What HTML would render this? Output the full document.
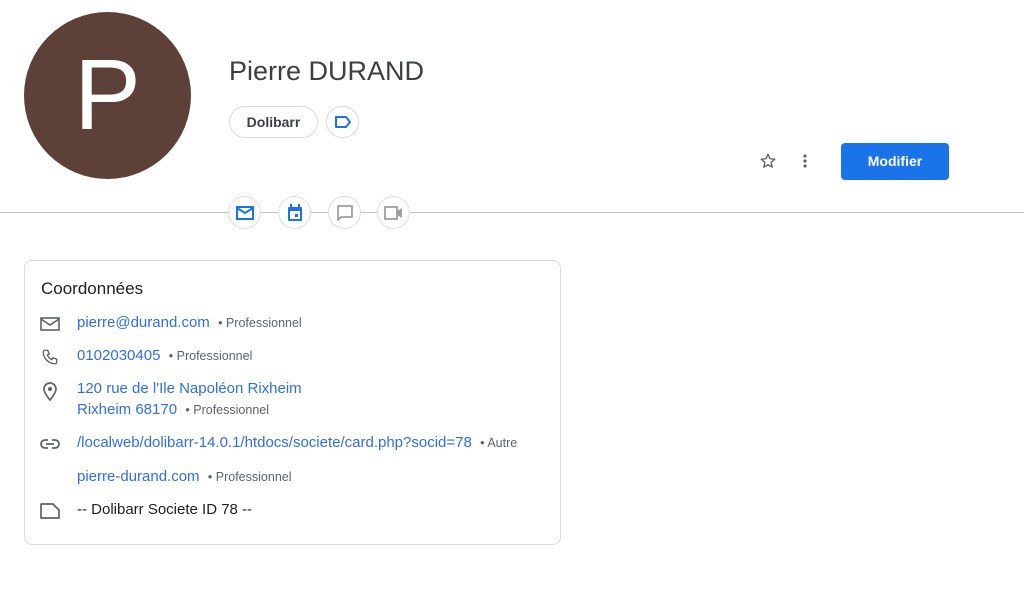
<!DOCTYPE html>
<html><head><meta charset="utf-8"><style>
*{margin:0;padding:0;box-sizing:border-box}
body{width:1024px;height:605px;background:#fff;font-family:"Liberation Sans",sans-serif;position:relative;overflow:hidden;color:#202124}
.abs{position:absolute}
.avatar{left:24px;top:12px;width:167px;height:167px;border-radius:50%;background:#5d4037;color:#fff;font-size:100px;text-align:center;line-height:167px}
.name{left:229px;top:56px;font-size:27px;color:#3c4043}
.chip{top:106px;height:32px;border:1px solid #dadce0;border-radius:16px;font-size:14px;font-weight:bold;color:#3c4043;line-height:30px;text-align:center}
.line{left:0;top:212px;width:1024px;height:1px;background:#c4c4c4}
.circ{top:196px;width:33px;height:33px;border:1px solid #e0e0e0;border-radius:50%;background:#fff;display:flex;align-items:center;justify-content:center}
.btn{left:841px;top:143px;width:108px;height:37px;background:#1a73e8;border-radius:4px;color:#fff;font-weight:bold;font-size:14px;text-align:center;line-height:37px}
.card{left:24px;top:260px;width:537px;height:285px;border:1px solid #dadce0;border-radius:8px}
.title{left:41px;top:279px;font-size:17px;color:#202124}
.row{left:77px;font-size:15px;color:#2f6fe4;white-space:nowrap}
.row small{font-size:12.5px;color:#5f6368}
.ic{left:40px}
</style></head><body>
<div class="abs avatar">P</div>
<div class="abs name">Pierre DURAND</div>
<div class="abs chip" style="left:229px;width:89px">Dolibarr</div>
<div class="abs chip" style="left:326px;width:33px;display:flex;align-items:center;justify-content:center"><svg width="18" height="14" viewBox="0 0 18 14"><path d="M2 2h10l4 5-4 5H2z" fill="none" stroke="#1a73e8" stroke-width="2" stroke-linejoin="round"/></svg></div>
<svg class="abs" style="left:759px;top:152px" width="18" height="18" viewBox="0 0 24 24"><path d="M12 3l2.7 6 6.3.6-4.8 4.3 1.4 6.3L12 17l-5.6 3.2 1.4-6.3L3 9.6 9.3 9z" fill="none" stroke="#5f6368" stroke-width="1.8" stroke-linejoin="round"/></svg>
<svg class="abs" style="left:802px;top:153px" width="6" height="16"><circle cx="3" cy="3" r="1.6" fill="#5f6368"/><circle cx="3" cy="8" r="1.6" fill="#5f6368"/><circle cx="3" cy="13" r="1.6" fill="#5f6368"/></svg>
<div class="abs btn">Modifier</div>
<div class="abs line"></div>
<div class="abs circ" style="left:228px"><svg width="18" height="14" viewBox="0 0 18 14"><rect x="1" y="1" width="16" height="12" fill="none" stroke="#1a73e8" stroke-width="2"/><path d="M1 2l8 5 8-5" fill="none" stroke="#1a73e8" stroke-width="2"/></svg></div>
<div class="abs circ" style="left:278px"><svg width="16" height="18" viewBox="0 0 16 18"><rect x="1" y="3" width="14" height="14" rx="1" fill="#1a73e8"/><rect x="3" y="7" width="10" height="8" fill="#fff"/><rect x="8" y="10" width="3" height="3" fill="#1a73e8"/><rect x="3" y="0" width="2" height="4" fill="#1a73e8"/><rect x="11" y="0" width="2" height="4" fill="#1a73e8"/></svg></div>
<div class="abs circ" style="left:328px"><svg width="18" height="18" viewBox="0 0 18 18"><path d="M2 2h14v11H5l-3 3z" fill="none" stroke="#9e9e9e" stroke-width="1.8" stroke-linejoin="round"/></svg></div>
<div class="abs circ" style="left:377px"><svg width="20" height="14" viewBox="0 0 20 14"><rect x="1" y="1" width="12" height="12" fill="none" stroke="#9e9e9e" stroke-width="1.8"/><path d="M13 5l5-3v10l-5-3z" fill="#9e9e9e"/></svg></div>
<div class="abs card"></div>
<div class="abs title">Coordonnées</div>
<svg class="abs ic" style="top:317px" width="20" height="14" viewBox="0 0 20 14"><rect x="1" y="1" width="18" height="12" fill="none" stroke="#5f6368" stroke-width="1.6"/><path d="M1 2l9 6 9-6" fill="none" stroke="#5f6368" stroke-width="1.6"/></svg>
<div class="abs row" style="top:314px">pierre@durand.com &nbsp;<small>• Professionnel</small></div>
<svg class="abs ic" style="top:348px" width="20" height="18" viewBox="0 0 24 24"><path d="M5 3h4l2 5-2.5 1.5a11 11 0 0 0 6 6L16 13l5 2v4a2 2 0 0 1-2 2A16 16 0 0 1 3 5a2 2 0 0 1 2-2z" fill="none" stroke="#5f6368" stroke-width="1.8"/></svg>
<div class="abs row" style="top:347px">0102030405 &nbsp;<small>• Professionnel</small></div>
<svg class="abs ic" style="top:381px;left:42px" width="16" height="20" viewBox="0 0 16 20"><path d="M8 19s-6-7-6-11a6 6 0 0 1 12 0c0 4-6 11-6 11z" fill="none" stroke="#5f6368" stroke-width="1.7"/><circle cx="8" cy="8" r="2" fill="#5f6368"/></svg>
<div class="abs row" style="top:380px">120 rue de l'Ile Napoléon Rixheim</div>
<div class="abs row" style="top:401px">Rixheim 68170 &nbsp;<small>• Professionnel</small></div>
<svg class="abs ic" style="top:438px" width="20" height="12" viewBox="0 0 20 12"><path d="M8 2H5a4 4 0 0 0 0 8h3M12 2h3a4 4 0 0 1 0 8h-3M6 6h8" fill="none" stroke="#5f6368" stroke-width="1.8"/></svg>
<div class="abs row" style="top:434px">/localweb/dolibarr-14.0.1/htdocs/societe/card.php?socid=78 &nbsp;<small>• Autre</small></div>
<div class="abs row" style="top:468px">pierre-durand.com &nbsp;<small>• Professionnel</small></div>
<svg class="abs ic" style="top:503px" width="20" height="16" viewBox="0 0 20 16"><path d="M1 1h12l6 6v8H1z" fill="none" stroke="#5f6368" stroke-width="1.7" stroke-linejoin="round"/></svg>
<div class="abs row" style="top:501px;color:#202124">-- Dolibarr Societe ID 78 --</div>
</body></html>
